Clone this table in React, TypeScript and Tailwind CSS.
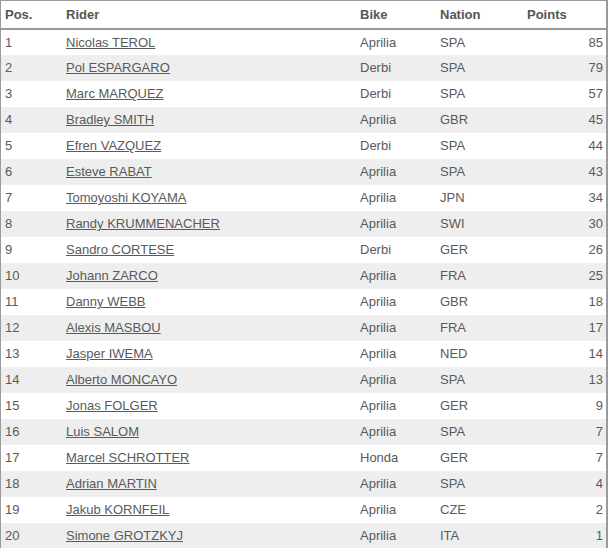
const riders = [
  [1, 'Nicolas TEROL', 'Aprilia', 'SPA', 85],
  [2, 'Pol ESPARGARO', 'Derbi', 'SPA', 79],
  [3, 'Marc MARQUEZ', 'Derbi', 'SPA', 57],
  [4, 'Bradley SMITH', 'Aprilia', 'GBR', 45],
  [5, 'Efren VAZQUEZ', 'Derbi', 'SPA', 44],
  [6, 'Esteve RABAT', 'Aprilia', 'SPA', 43],
  [7, 'Tomoyoshi KOYAMA', 'Aprilia', 'JPN', 34],
  [8, 'Randy KRUMMENACHER', 'Aprilia', 'SWI', 30],
  [9, 'Sandro CORTESE', 'Derbi', 'GER', 26],
  [10, 'Johann ZARCO', 'Aprilia', 'FRA', 25],
  [11, 'Danny WEBB', 'Aprilia', 'GBR', 18],
  [12, 'Alexis MASBOU', 'Aprilia', 'FRA', 17],
  [13, 'Jasper IWEMA', 'Aprilia', 'NED', 14],
  [14, 'Alberto MONCAYO', 'Aprilia', 'SPA', 13],
  [15, 'Jonas FOLGER', 'Aprilia', 'GER', 9],
  [16, 'Luis SALOM', 'Aprilia', 'SPA', 7],
  [17, 'Marcel SCHROTTER', 'Honda', 'GER', 7],
  [18, 'Adrian MARTIN', 'Aprilia', 'SPA', 4],
  [19, 'Jakub KORNFEIL', 'Aprilia', 'CZE', 2],
  [20, 'Simone GROTZKYJ', 'Aprilia', 'ITA', 1],
] as const;

export default function App() {
  return (
    <div className="w-[608px] bg-white border-l border-t border-r-2 border-[#9a9a9a] font-['Liberation_Sans',Arial,sans-serif] text-[13px] text-[#5a5a5a]">
      <table className="w-full border-collapse table-fixed">
        <thead>
          <tr className="h-[28px] border-b-2 border-[#999] text-[#555]">
            <th className="w-[65px] pl-[4px] text-left font-bold">Pos.</th>
            <th className="w-[294px] text-left font-bold">Rider</th>
            <th className="w-[80px] text-left font-bold">Bike</th>
            <th className="w-[87px] text-left font-bold">Nation</th>
            <th className="text-left font-bold">Points</th>
          </tr>
        </thead>
        <tbody>
          {riders.map(([pos, name, bike, nation, pts], i) => (
            <tr key={pos} className={`h-[26px] ${i % 2 === 1 ? 'bg-[#eeeeee]' : 'bg-white'}`}>
              <td className="pl-[4px]">{pos}</td>
              <td>
                <a href="#" className="underline text-[#5a5a5a]">{name}</a>
              </td>
              <td>{bike}</td>
              <td>{nation}</td>
              <td className="pr-[3px] text-right">{pts}</td>
            </tr>
          ))}
        </tbody>
      </table>
    </div>
  );
}
